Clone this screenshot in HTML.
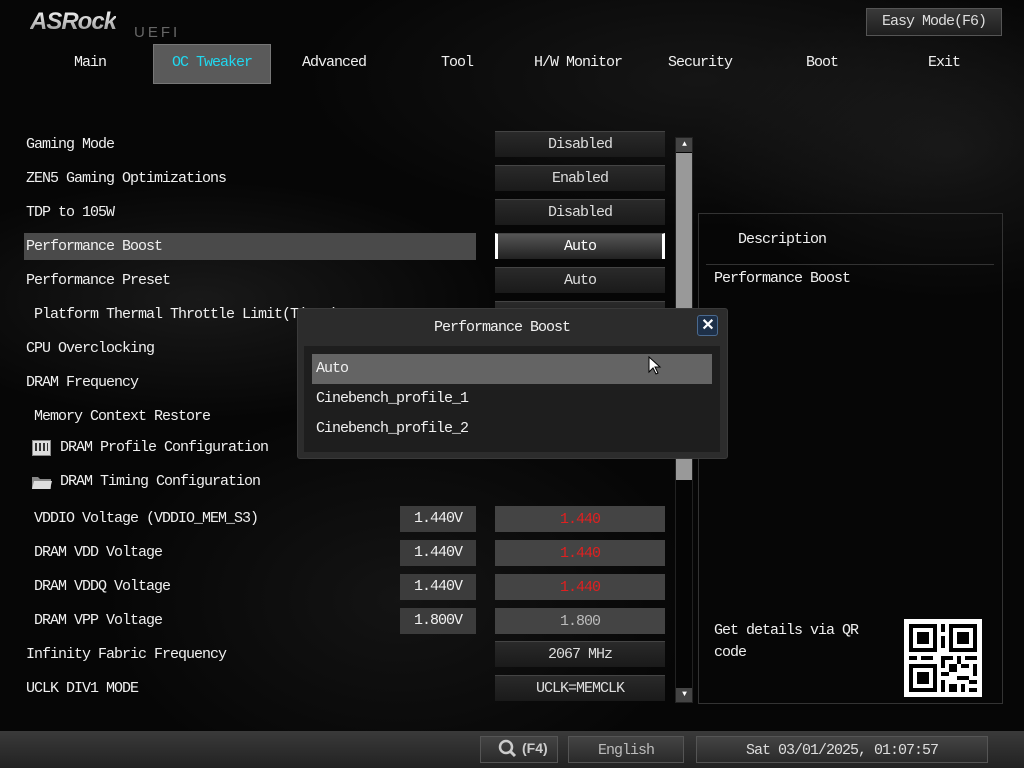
<!DOCTYPE html>
<html><head><meta charset="utf-8">
<style>
*{margin:0;padding:0;box-sizing:border-box}
body{width:1024px;height:768px;overflow:hidden;background:#050505;position:relative;font-family:"Liberation Mono",monospace;color:#f0f0f0;font-size:15px;letter-spacing:-1px}
.bg{position:absolute;inset:0;background:
radial-gradient(ellipse 300px 120px at 200px 300px,rgba(60,60,60,.35),transparent),
radial-gradient(ellipse 400px 150px at 700px 80px,rgba(50,50,50,.35),transparent),
radial-gradient(ellipse 300px 200px at 400px 600px,rgba(45,45,45,.35),transparent),
radial-gradient(ellipse 250px 150px at 950px 150px,rgba(60,60,60,.3),transparent),#060606}
.a{position:absolute;white-space:nowrap}
.tab{position:absolute;top:52px;height:22px;line-height:20px;font-size:15px;text-align:center}
.lbl{position:absolute;left:26px;height:26px;line-height:26px;font-size:15px}
.val{position:absolute;left:495px;width:170px;height:26px;line-height:26px;text-align:center;font-size:15px;color:#ddd;background:linear-gradient(#2a2a2a,#1a1a1a);border-top:1px solid #444}
.v2{position:absolute;left:400px;width:76px;height:26px;line-height:26px;text-align:center;background:#3c3c3c;font-size:15px}
.red{background:#444;color:#e02020}
</style></head><body>
<div class="bg"></div>
<div class="a" style="left:30px;top:8px;font:italic bold 24px 'Liberation Sans',sans-serif;letter-spacing:-1px;background:linear-gradient(#fff,#888);-webkit-background-clip:text;color:transparent">ASRock</div>
<div class="a" style="left:134px;top:24px;font:15px 'Liberation Sans',sans-serif;color:#666;letter-spacing:3px">UEFI</div>
<div class="a" style="left:866px;top:8px;width:136px;height:28px;border:1px solid #555;background:linear-gradient(#3a3a3a,#1e1e1e);text-align:center;line-height:26px;font-size:15px;color:#ddd">Easy Mode(F6)</div>
<div class="a" style="left:153px;top:44px;width:118px;height:40px;background:#5a5a5a;border:1px solid #777"></div>
<div class="tab" style="left:50px;width:80px;top:53px">Main</div>
<div class="tab" style="left:153px;width:118px;color:#20d8f0;top:53px">OC Tweaker</div>
<div class="tab" style="left:284px;width:100px;top:53px">Advanced</div>
<div class="tab" style="left:417px;width:80px;top:53px">Tool</div>
<div class="tab" style="left:520px;width:116px;top:53px">H/W Monitor</div>
<div class="tab" style="left:650px;width:100px;top:53px">Security</div>
<div class="tab" style="left:782px;width:80px;top:53px">Boot</div>
<div class="tab" style="left:904px;width:80px;top:53px">Exit</div>

<div class="a" style="left:24px;top:233px;width:452px;height:27px;background:#4a4a4a"></div>
<div class="lbl" style="top:132px">Gaming Mode</div>
<div class="lbl" style="top:166px">ZEN5 Gaming Optimizations</div>
<div class="lbl" style="top:200px">TDP to 105W</div>
<div class="lbl" style="top:234px">Performance Boost</div>
<div class="lbl" style="top:268px">Performance Preset</div>
<div class="lbl" style="top:302px;left:34px">Platform Thermal Throttle Limit(TjMax)</div>
<div class="lbl" style="top:336px">CPU Overclocking</div>
<div class="lbl" style="top:370px">DRAM Frequency</div>
<div class="lbl" style="top:404px;left:34px">Memory Context Restore</div>
<div class="a" style="left:32px;top:440px;width:19px;height:16px;background:#ddd;border:1px solid #888;padding:2px"><div style="height:8px;background:repeating-linear-gradient(90deg,#333 0 2px,#ddd 2px 4px)"></div></div>
<div class="lbl" style="top:435px;left:60px">DRAM Profile Configuration</div>
<svg class="a" style="left:31px;top:474px" width="22" height="16" viewBox="0 0 22 16"><path d="M1 3h6l2 2h11v10H1z" fill="#888"/><path d="M3 7h18l-2 8H1z" fill="#ddd"/></svg>
<div class="lbl" style="top:469px;left:60px">DRAM Timing Configuration</div>
<div class="lbl" style="top:506px;left:34px">VDDIO Voltage (VDDIO_MEM_S3)</div>
<div class="lbl" style="top:540px;left:34px">DRAM VDD Voltage</div>
<div class="lbl" style="top:574px;left:34px">DRAM VDDQ Voltage</div>
<div class="lbl" style="top:608px;left:34px">DRAM VPP Voltage</div>
<div class="lbl" style="top:642px">Infinity Fabric Frequency</div>
<div class="lbl" style="top:676px">UCLK DIV1 MODE</div>

<div class="val" style="top:131px">Disabled</div>
<div class="val" style="top:165px">Enabled</div>
<div class="val" style="top:199px">Disabled</div>
<div class="val" style="top:233px;background:linear-gradient(#555,#222);color:#fff;border-left:3px solid #fff;border-right:3px solid #fff">Auto</div>
<div class="val" style="top:267px">Auto</div>
<div class="val" style="top:301px">Auto</div>
<div class="v2" style="top:506px">1.440V</div>
<div class="v2" style="top:540px">1.440V</div>
<div class="v2" style="top:574px">1.440V</div>
<div class="v2" style="top:608px">1.800V</div>
<div class="val red" style="top:506px;color:#e02020">1.440</div>
<div class="val red" style="top:540px;color:#e02020">1.440</div>
<div class="val red" style="top:574px;color:#e02020">1.440</div>
<div class="val" style="top:608px;background:#444;color:#bbb">1.800</div>
<div class="val" style="top:641px">2067 MHz</div>
<div class="val" style="top:675px">UCLK=MEMCLK</div>

<div class="a" style="left:675px;top:137px;width:18px;height:566px;border:1px solid #222;background:#050505"></div>
<div class="a" style="left:676px;top:138px;width:16px;height:14px;background:#444;color:#fff;font-size:8px;text-align:center;line-height:14px">▲</div>
<div class="a" style="left:676px;top:153px;width:16px;height:327px;background:#999"></div>
<div class="a" style="left:676px;top:688px;width:16px;height:14px;background:#444;color:#fff;font-size:8px;text-align:center;line-height:14px">▼</div>

<div class="a" style="left:698px;top:213px;width:305px;height:491px;border:1px solid #333"></div>
<div class="a" style="left:738px;top:231px;font-size:15px">Description</div>
<div class="a" style="left:706px;top:264px;width:288px;height:1px;background:#333"></div>
<div class="a" style="left:714px;top:270px;font-size:15px">Performance Boost</div>
<div class="a" style="left:714px;top:620px;font-size:15px;line-height:22px">Get details via QR<br>code</div>
<div class="a" style="left:904px;top:619px;width:78px;height:78px;background:#fff;padding:5px">
<svg width="68" height="68" viewBox="0 0 17 17" shape-rendering="crispEdges"><g fill="#000">
<path d="M0 0h7v7H0zM1 1v5h5V1zM2 2h3v3H2zM10 0h7v7h-7zM11 1v5h5V1zM12 2h3v3h-3zM0 10h7v7H0zM1 11v5h5v-5zM2 12h3v3H2z" fill-rule="evenodd"/>
<path d="M8 0h1v2H8zM8 3h1v3H8zM9 8h2v1H9zM0 8h2v1H0zM3 8h3v1H3zM8 8h1v3H8zM12 8h1v2h-1zM14 8h3v1h-3zM10 10h2v2h-2zM13 10h2v1h-2zM16 10h1v3h-1zM8 12h2v1H8zM12 13h3v1h-3zM8 14h1v3H8zM10 15h2v2h-2zM13 15h1v2h-1zM15 14h2v1h-2zM15 16h2v1h-2z"/></g></svg></div>

<div class="a" style="left:297px;top:308px;width:431px;height:151px;background:#2c2c2c;border:1px solid #3a3a3a;border-radius:3px"></div>
<div class="a" style="left:297px;top:319px;width:410px;text-align:center;font-size:15px">Performance Boost</div>
<div class="a" style="left:697px;top:315px;width:21px;height:21px;background:#1e3048;border:1px solid #4a6a90;border-radius:3px;color:#fff;font:bold 16px 'Liberation Sans',sans-serif;text-align:center;line-height:19px">✕</div>
<div class="a" style="left:304px;top:346px;width:416px;height:106px;background:#1e1e1e"></div>
<div class="a" style="left:312px;top:354px;width:400px;height:30px;background:#646464"></div>
<div class="a" style="left:316px;top:360px;font-size:15px">Auto</div>
<div class="a" style="left:316px;top:390px;font-size:15px">Cinebench_profile_1</div>
<div class="a" style="left:316px;top:420px;font-size:15px">Cinebench_profile_2</div>
<svg class="a" style="left:648px;top:356px" width="14" height="20" viewBox="0 0 14 20"><path d="M1 1v15l4-4 3 6 2-1-3-6h5z" fill="#fff" stroke="#000"/></svg>

<div class="a" style="left:0;top:731px;width:1024px;height:37px;background:linear-gradient(#3a3a3a,#222)"></div>
<div class="a" style="left:480px;top:736px;width:78px;height:27px;border:1px solid #555;background:linear-gradient(#444,#2a2a2a)"></div>
<svg class="a" style="left:498px;top:739px" width="20" height="20" viewBox="0 0 20 20"><circle cx="8" cy="8" r="6" fill="none" stroke="#ccc" stroke-width="2.5"/><path d="M12 12l5 5" stroke="#ccc" stroke-width="3"/></svg>
<div class="a" style="left:522px;top:740px;color:#ccc;font:bold 14px 'Liberation Sans',sans-serif;letter-spacing:0">(F4)</div>
<div class="a" style="left:568px;top:736px;width:116px;height:27px;border:1px solid #555;background:linear-gradient(#444,#2a2a2a);color:#bbb;text-align:center;line-height:27px;font-size:15px">English</div>
<div class="a" style="left:696px;top:736px;width:292px;height:27px;border:1px solid #555;background:linear-gradient(#444,#2a2a2a);color:#ddd;text-align:center;line-height:28px;font-size:15px">Sat 03/01/2025, 01:07:57</div>
</body></html>
